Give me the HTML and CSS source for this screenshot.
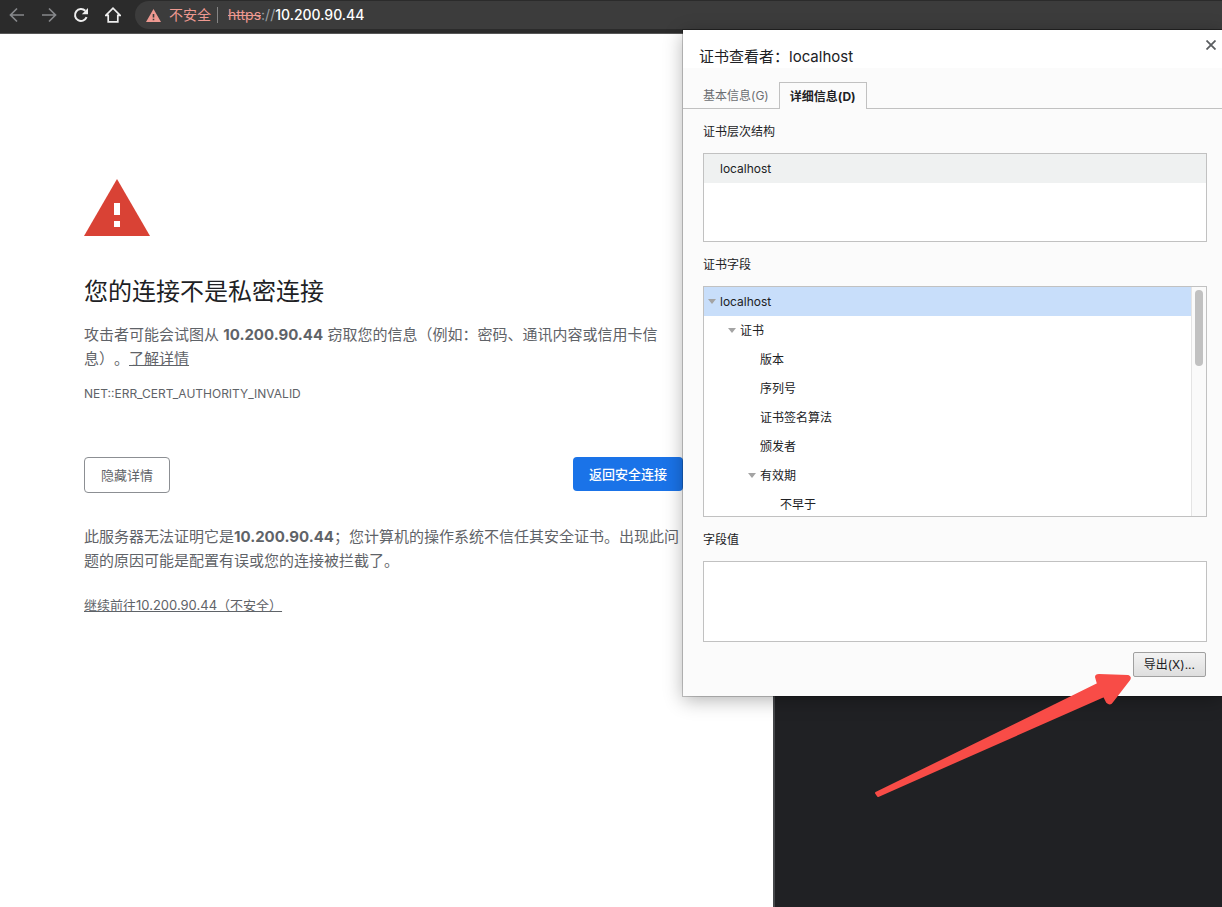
FILE: index.html
```html
<!DOCTYPE html>
<html lang="zh-CN">
<head>
<meta charset="utf-8">
<meta name="viewport" content="width=device-width, initial-scale=1">
<title>隐私设置错误</title>
<link rel="stylesheet" href="styles.css">
</head>
<body>
<div class="browser">
  <header class="toolbar">
    <button class="nav-button dim" type="button" aria-label="后退"><svg viewBox="0 0 16 16"><path d="M15 8H2M8 1.500 1.500 8 8 14.500"/></svg></button>
    <button class="nav-button dim" type="button" aria-label="前进"><svg viewBox="0 0 16 16"><path d="M1 8h13M8 1.500 14.500 8 8 14.500"/></svg></button>
    <button class="nav-button" type="button" aria-label="重新加载"><svg viewBox="0 0 16 16"><path d="M13.600 10.200A6 6 0 1 1 12.300 3.800"/><path class="solid" d="M15 1v6.200H8.800z"/></svg></button>
    <button class="nav-button home" type="button" aria-label="主页"><svg viewBox="0 0 16 16"><path d="M.8 8.300 8 1.200 15.200 8.300H12.800V14.800H3.200V8.300z"/></svg></button>
    <div class="omnibox">
      <svg class="omnibox-icon" viewBox="0 0 15 13"><path fill="#ee9991" fill-rule="evenodd" d="M7.500 0 15 13H0zM6.700 5v3.500h1.600V5zM6.700 9.700v1.600h1.600V9.700z"/></svg>
      <span class="insecure">不安全</span>
      <span class="url"><s>https</s><span class="slashes">://</span>10.200.90.44</span>
    </div>
  </header>
  <div class="workspace">
    <main class="page">
      <div class="interstitial">
        <svg class="warning" viewBox="0 0 66 57"><path fill="#d94235" d="M33 0 66 57H0z"/><path fill="#fff" d="M30 24h6v12h-6zM30 42h6v6h-6z"/></svg>
        <h1>您的连接不是私密连接</h1>
        <p class="message">攻击者可能会试图从 <strong>10.200.90.44</strong> 窃取您的信息（例如：密码、通讯内容或信用卡信息）。<a href="#details">了解详情</a></p>
        <p class="error-code">NET::ERR_CERT_AUTHORITY_INVALID</p>
        <div class="actions">
          <button class="secondary" type="button">隐藏详情</button>
          <button class="primary" type="button">返回安全连接</button>
        </div>
        <p class="message" id="details">此服务器无法证明它是<strong>10.200.90.44</strong>；您计算机的操作系统不信任其安全证书。出现此问题的原因可能是配置有误或您的连接被拦截了。</p>
        <p class="proceed"><a href="#proceed">继续前往10.200.90.44（不安全）</a></p>
      </div>
    </main>
    <aside class="devtools"></aside>
  </div>

  <section class="dialog" role="dialog" aria-labelledby="dialog-title">
    <header class="dialog-header">
      <h2 id="dialog-title">证书查看者：localhost</h2>
      <button class="close" type="button" aria-label="关闭"><svg viewBox="0 0 10 10"><path d="m.5.5 9 9M9.500.5l-9 9"/></svg></button>
    </header>
    <div class="tabs" role="tablist">
      <button class="tab" type="button" role="tab" aria-selected="false">基本信息(G)</button>
      <button class="tab active" type="button" role="tab" aria-selected="true">详细信息(D)</button>
    </div>
    <div class="details">
      <h3>证书层次结构</h3>
      <div class="box hierarchy"><div class="row level-0">localhost</div></div>
      <h3>证书字段</h3>
      <div class="box fields">
        <div class="tree" role="tree">
          <div class="row level-0 selected" role="treeitem"><i class="twisty"></i>localhost</div>
          <div class="row level-1" role="treeitem"><i class="twisty"></i>证书</div>
          <div class="row level-2" role="treeitem">版本</div>
          <div class="row level-2" role="treeitem">序列号</div>
          <div class="row level-2" role="treeitem">证书签名算法</div>
          <div class="row level-2" role="treeitem">颁发者</div>
          <div class="row level-2" role="treeitem"><i class="twisty"></i>有效期</div>
          <div class="row level-3" role="treeitem">不早于</div>
        </div>
        <div class="scrollbar"><div class="thumb"></div></div>
      </div>
      <h3><label for="field-value">字段值</label></h3>
      <textarea class="box value" id="field-value" readonly></textarea>
      <button class="export" type="button">导出(X)...</button>
    </div>
    <svg class="arrow" viewBox="0 0 258 126"><path fill="#f84c47" stroke="#f84c47" stroke-width="2" stroke-linejoin="round" d="M2 120 224 11 222 4Q222 2 225 2L254 3Q257 4 255 7L238 29Q236 32 233 29L230 23 4 123z"/></svg>
  </section>
</div>
</body>
</html>
```

FILE: styles.css
```css
* { box-sizing: border-box; }

body {
  margin: 0;
  font-family: Inter, "Noto Sans CJK SC", sans-serif;
  font-size: 12px;
  color: #202124;
  text-spacing-trim: space-all;
}

h1, h2, h3, p { margin: 0; font-weight: 400; }
button { padding: 0; font: inherit; color: inherit; }
svg { display: block; }

.browser {
  position: relative;
  display: flex;
  flex-direction: column;
  min-height: 100vh;
  overflow: hidden;
}

.toolbar {
  display: flex;
  align-items: flex-start;
  gap: 16px;
  height: 34px;
  padding: 1px 0 0 9px;
  background: #2b2b2b;
  border-bottom: 1px solid #575757;
}
.nav-button {
  display: flex;
  align-items: center;
  width: 16px;
  height: 28px;
  background: none;
  border: 0;
}
.nav-button svg {
  width: 16px;
  height: 16px;
  fill: none;
  stroke: #eee;
  stroke-width: 2;
}
.nav-button.dim svg { stroke: #86888b; stroke-width: 1.7; }
.nav-button.home svg { stroke-width: 1.7; }
.nav-button .solid { fill: #eee; stroke: none; }

.omnibox {
  display: flex;
  flex: 1;
  align-items: center;
  height: 28px;
  margin-left: -2px;
  padding-left: 11px;
  background: #3c3c3c;
  border-radius: 14px 0 0 14px;
  font-size: 14px;
  line-height: 16px;
}
.omnibox-icon { width: 15px; height: 13px; margin-right: 8px; }
.insecure {
  padding-right: 6px;
  color: #ee9991;
  border-right: 1px solid #858585;
}
.url { padding-left: 10px; color: #fff; font-weight: 500; }
.url s { color: #ee9991; font-weight: 400; }
.slashes { color: #9aa0a6; font-weight: 400; }

.workspace {
  display: grid;
  flex: 1;
  grid-template-columns: minmax(0, 773fr) minmax(0, 449fr);
}
.page { padding-left: 84px; background: #fff; }
.interstitial { max-width: 599px; padding-top: 145px; color: #5f6368; }
.warning { width: 66px; height: 57px; }
.interstitial h1 {
  margin: 41px 0 16px;
  color: #202124;
  font-size: 24px;
  line-height: 30px;
}
.message { font-size: 15px; line-height: 24px; }
.interstitial a { color: inherit; text-decoration: underline; }
.error-code { margin-top: 14px; line-height: 18px; }
.actions {
  display: flex;
  justify-content: space-between;
  align-items: flex-start;
  margin: 54px 0 32px;
  font-size: 13px;
}
.secondary, .primary { height: 36px; padding: 0 16px 2px; border-radius: 4px; }
.secondary { background: #fff; border: 1px solid #8c8f93; }
.primary { height: 34px; background: #1a73e8; border: 0; color: #fff; font-weight: 500; }
.proceed { margin-top: 22px; font-size: 13px; line-height: 20px; }

.devtools { background: #202124; border-left: 2px solid #45474a; }

.dialog {
  position: absolute;
  top: 30px;
  right: 0;
  width: 539px;
  background: #fbfbfb;
  box-shadow: 0 0 0 1px rgba(0, 0, 0, .2), 0 4px 18px rgba(0, 0, 0, .3);
}
.dialog-header {
  display: flex;
  justify-content: space-between;
  align-items: flex-start;
  height: 38px;
  padding: 10px 6px 0 16px;
  background: #fff;
}
.dialog-header h2 { padding-top: 7px; font-size: 15px; line-height: 20px; }
.close { width: 10px; height: 10px; background: none; border: 0; }
.close svg { width: 10px; height: 10px; stroke: #5a5d60; stroke-width: 1.8; }

.tabs {
  display: flex;
  align-items: flex-end;
  height: 41px;
  padding-left: 9px;
  border-bottom: 1px solid #c1c1c1;
}
.tab {
  height: 26px;
  padding: 0 10px 2px;
  background: none;
  border: 1px solid transparent;
  border-bottom: 0;
  color: #6b6e72;
}
.tab.active {
  min-width: 88px;
  height: 27px;
  margin: 0 0 -1px -1px;
  background: #fbfbfb;
  border-color: #c1c1c1;
  color: #202124;
  font-weight: 700;
}

.details {
  display: flex;
  flex-direction: column;
  padding: 0 15px 19px 20px;
}
.details h3 { margin: 14px 0 12px; font-size: 12px; line-height: 18px; }
.box { background: #fff; border: 1px solid #c1c1c1; }
.hierarchy { height: 89px; }
.hierarchy .row { background: #eff1f1; }
.fields { display: flex; height: 231px; overflow: hidden; }
.tree { flex: 1; }
.row { position: relative; height: 29px; line-height: 29px; }
.level-0 { padding-left: 16px; }
.level-1 { padding-left: 36px; }
.level-2 { padding-left: 56px; }
.level-3 { padding-left: 76px; }
.selected { background: #c8defa; }
.twisty {
  position: absolute;
  top: 12px;
  margin-left: -12px;
  border: 4px solid transparent;
  border-top: 5px solid #a4a4a4;
  border-bottom: 0;
}
.scrollbar {
  width: 15px;
  padding: 3px;
  background: #fafafa;
  border-left: 1px solid #e4e4e4;
}
.thumb { width: 8px; height: 76px; border-radius: 4px; background: #c1c1c1; }
.value { display: block; width: 100%; height: 81px; resize: none; }
.export {
  align-self: flex-end;
  height: 25px;
  margin: 10px 1px 0 0;
  padding: 0 10px 2px;
  background: linear-gradient(#f3f3f3, #dedede);
  border: 1px solid #a0a0a0;
  border-radius: 2px;
}

.arrow {
  position: absolute;
  right: 90px;
  bottom: -103px;
  width: 258px;
  height: 126px;
  pointer-events: none;
}
```
